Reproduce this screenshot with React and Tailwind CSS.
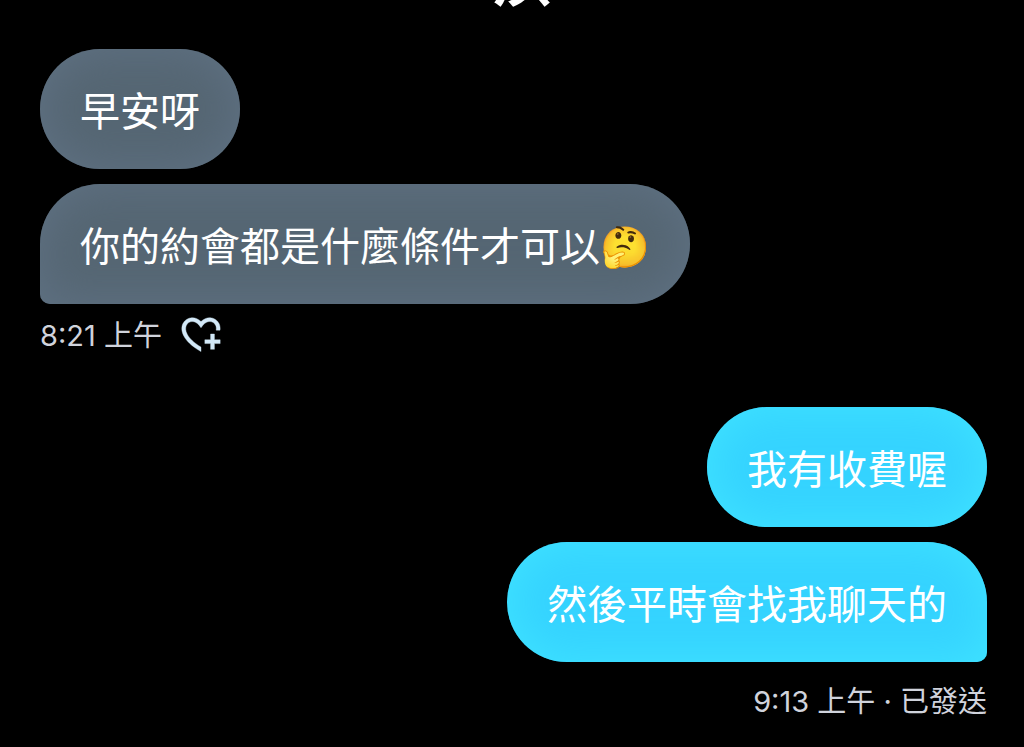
import React from 'react';

const MESSAGES = [
  {
    id: 'incoming',
    mine: false,
    bubbles: ['早安呀', '你的約會都是什麼條件才可以🤔'],
    status: '8:21 上午',
  },
  {
    id: 'outgoing',
    mine: true,
    bubbles: ['我有收費喔', '然後平時會找我聊天的'],
    status: '9:13 上午 · 已發送',
  },
];

const HeartPlus = () => (
  <svg viewBox="0 0 24 24" className="h-[46px] w-[46px]" fill="currentColor" stroke="currentColor" strokeWidth="0.2" aria-hidden="true">
    <path d="M17 12v3h-2.998v2h3v3h2v-3h3v-2h-3.001v-3H17zm-5 6.839c-3.871-2.34-6.053-4.639-7.127-6.609-1.112-2.04-1.031-3.7-.479-4.82.561-1.13 1.667-1.84 2.91-1.91 1.222-.06 2.68.51 3.892 2.16l.806 1.09.805-1.09c1.211-1.65 2.668-2.22 3.89-2.16 1.242.07 2.347.78 2.908 1.91.334.677.49 1.554.321 2.59h2.011c.153-1.283-.039-2.469-.539-3.48-.887-1.79-2.647-2.91-4.601-3.01-1.65-.09-3.367.56-4.796 2.01-1.43-1.45-3.147-2.1-4.798-2.01-1.954.1-3.714 1.22-4.601 3.01-.896 1.81-.846 4.17.514 6.67 1.353 2.48 4.003 5.12 8.382 7.67l.502.299v-2.32z" />
  </svg>
);

const Bubble = ({ text, mine, last }) => {
  const color = mine
    ? 'bg-[#35d3ff] shadow-[inset_0_0_48px_#40e4ff]'
    : 'bg-[#556673] shadow-[inset_0_0_48px_#607284]';
  // The last bubble of a group has a squared corner on the sender's side
  const corner = last ? (mine ? 'rounded-br-[10px]' : 'rounded-bl-[10px]') : '';

  return (
    <p className={`rounded-[60px] px-10 pt-[43px] pb-[37px] text-[40px] leading-10 text-white ${color} ${corner}`}>
      {text}
    </p>
  );
};

const MessageGroup = ({ group }) => (
  <section className={`flex flex-col gap-[15px] ${group.mine ? 'items-end' : 'items-start'}`}>
    {group.bubbles.map((text, i) => (
      <Bubble key={text} text={text} mine={group.mine} last={i === group.bubbles.length - 1} />
    ))}
    <div className={`flex h-[46px] items-center gap-4 text-[29px] text-[#d0d3dc] ${group.mine ? '' : '-mt-2'}`}>
      <span className="pt-1">{group.status}</span>
      {!group.mine && (
        <button type="button" aria-label="新增心情" className="text-[#d3e9f8]">
          <HeartPlus />
        </button>
      )}
    </div>
  </section>
);

const App = () => (
  <div className="min-h-screen bg-black pb-5 font-['Inter','Noto_Sans_CJK_TC',sans-serif]">
    <header className="flex h-[49px] items-start justify-center overflow-hidden">
      <h1 className="-mt-[51px] pl-[18px] text-[60px] leading-[60px] font-bold text-white">疾</h1>
    </header>
    <main className="flex flex-col gap-[50px] pr-[37px] pl-10">
      {MESSAGES.map((group) => (
        <MessageGroup key={group.id} group={group} />
      ))}
    </main>
  </div>
);

export default App;
